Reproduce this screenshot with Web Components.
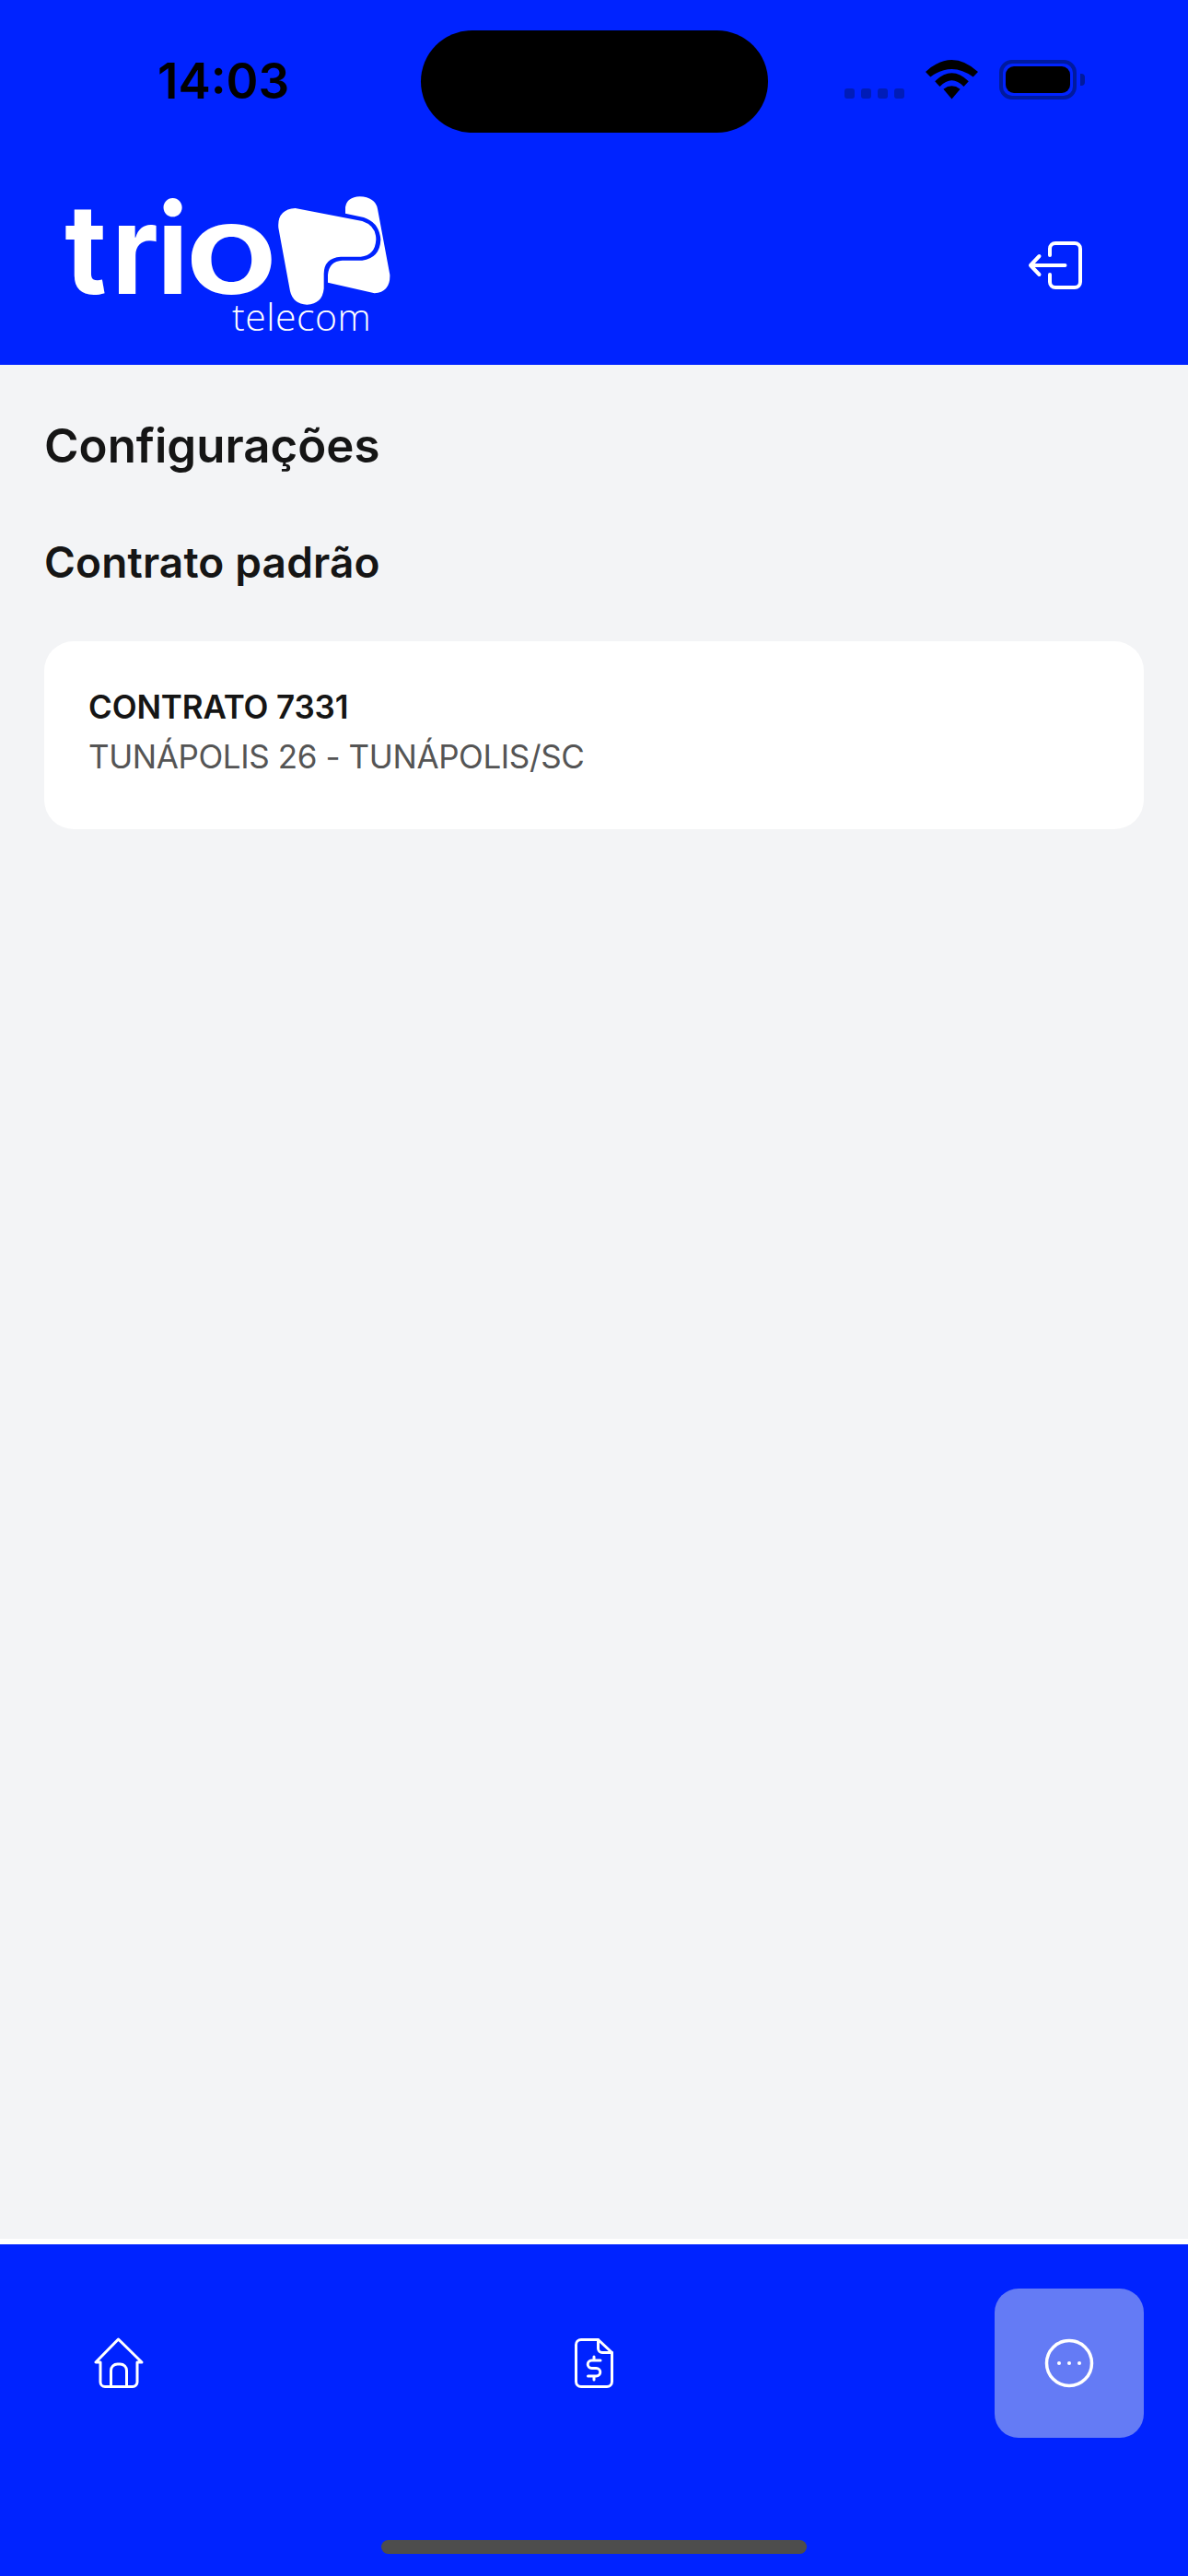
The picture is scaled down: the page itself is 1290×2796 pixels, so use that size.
<!DOCTYPE html>
<html lang="pt-BR">
<head>
<meta charset="utf-8">
<title>Configurações</title>
<style>
  html, body { margin: 0; padding: 0; background: #f3f4f6; }
  body { font-family: "Inter", "Liberation Sans", sans-serif; }
</style>
</head>
<body>
<app-shell>
  <app-header slot="header"></app-header>
  <section-title level="1">Configurações</section-title>
  <section-title level="2">Contrato padrão</section-title>
  <contract-card number="CONTRATO 7331" place="TUNÁPOLIS 26 - TUNÁPOLIS/SC"></contract-card>
  <bottom-nav slot="footer"></bottom-nav>
</app-shell>

<script>
class AppShell extends HTMLElement {
    connectedCallback() {
        const shadowRoot = this.attachShadow({ mode: 'open' });
        shadowRoot.innerHTML = `
        <style>
            :host { display: flex; flex-direction: column; width: 1290px; height: 2796px; background: #f3f4f6; overflow: hidden; }
            main { flex: 1; padding: 0 48px; min-height: 0; }
        </style>
        <slot name="header"></slot>
        <main><slot></slot></main>
        <slot name="footer"></slot>
        `;
    }
}
customElements.define('app-shell', AppShell);

class AppHeader extends HTMLElement {
    connectedCallback() {
        const shadowRoot = this.attachShadow({ mode: 'open' });
        shadowRoot.innerHTML = `
        <style>
            :host { display: block; height: 396px; background: #0023ff; }
            .status { display: grid; grid-template-columns: 457px 377px 1fr; height: 190px; }
            .time { padding: 58px 0 0 171px; font: 600 53px/60px "Inter", "Liberation Sans", sans-serif; color: #000; }
            .pill { margin-top: 33px; height: 111px; border-radius: 56px; background: #000; }
            .right { display: flex; align-items: flex-start; padding: 65px 0 0 83px; }
            .dots { display: flex; gap: 7px; margin-top: 31px; }
            .dots i { width: 11px; height: 11px; border-radius: 3px; background: #001cb8; }
            .wifi { margin-left: 23px; }
            .battery { margin-left: 23px; width: 84px; height: 43px; box-sizing: border-box; border: 4px solid #001a9e; border-radius: 14px; padding: 3px 3px; }
            .battery b { display: block; height: 100%; background: #000; border-radius: 9px; }
            .cap { width: 5px; height: 13px; margin: 15px 0 0 4px; background: #001a9e; border-radius: 0 4px 4px 0; }
            .bar { display: flex; justify-content: space-between; align-items: flex-start; height: 206px; padding-right: 113px; }
            .exit { margin-top: 70px; }
        </style>
        <div class="status">
            <div class="time">14:03</div>
            <div class="pill"></div>
            <div class="right">
                <div class="dots"><i></i><i></i><i></i><i></i></div>
                <svg class="wifi" width="57" height="43" viewBox="0 0 57 43" fill="#000">
                    <path d="M0 13Q28.5-13 57 13L51.7 18.5Q28.5 1.5 5.3 18.5Z"/>
                    <path d="M10.2 23.3Q28.5 5.3 46.8 23.3L41.5 29Q28.5 15.6 15.5 29Z"/>
                    <path d="M19.4 31.7Q28.5 24.9 37.6 31.7L28.5 42.5Z"/>
                </svg>
                <div class="battery"><b></b></div>
                <div class="cap"></div>
            </div>
        </div>
        <div class="bar">
            <trio-logo></trio-logo>
            <svg class="exit" width="62" height="56" viewBox="0 0 62 56" fill="none" stroke="#fff" stroke-width="4" stroke-linecap="round" stroke-linejoin="round">
                <path d="M25 17V10a6 6 0 0 1 6-6H52a6 6 0 0 1 6 6V46a6 6 0 0 1-6 6H31a6 6 0 0 1-6-6V38"/>
                <path d="M41.5 28H4M13.5 18L4 28L13.5 38"/>
            </svg>
        </div>
        `;
    }
}
customElements.define('app-header', AppHeader);

class TrioLogo extends HTMLElement {
    connectedCallback() {
        const shadowRoot = this.attachShadow({ mode: 'open' });
        shadowRoot.innerHTML = `
        <style>
            :host { display: block; width: 400px; height: 190px; margin-left: 50px; }
            svg { display: block; margin-top: -10px; }
            .tri { font: 700 405px "Inter", "Liberation Sans", sans-serif; }
            .o { font: 600 405px "Inter", "Liberation Sans", sans-serif; }
            .sub { font: 300 123px "Open Sans", "Liberation Sans", sans-serif; letter-spacing: 1.5px; }
        </style>
        <svg width="400" height="200" viewBox="0 -30 1200 600" fill="#fff">
            <text class="tri" transform="scale(.92 1)" x="66 232 394" y="388">tri</text>
            <text class="o" transform="scale(1.23 1)" x="368" y="385">o</text>
            <path d="M757 172Q752 112 812 108L1030 150Q1075 165 1075 210Q1072 262 1025 266L960 266Q905 270 905 322L905 370Q900 420 850 422Q805 420 795 378Z"/>
            <path d="M975 125L975 105Q980 72 1022 70Q1072 72 1080 110L1120 325Q1122 380 1070 385L918 350L918 325Q922 280 965 278L1030 278Q1088 270 1090 210Q1086 155 1035 138Z"/>
            <text class="sub" x="606" y="506">telecom</text>
        </svg>
        `;
    }
}
customElements.define('trio-logo', TrioLogo);

class SectionTitle extends HTMLElement {
    connectedCallback() {
        const shadowRoot = this.attachShadow({ mode: 'open' });
        shadowRoot.innerHTML = `
        <style>
            :host { display: block; color: #151515; font-family: "Inter", "Liberation Sans", sans-serif; font-weight: 600; }
            :host([level="1"]) { font-size: 51px; line-height: 60px; padding-top: 58px; }
            :host([level="2"]) { font-size: 46px; line-height: 56px; padding-top: 68px; letter-spacing: 0.15px; }
        </style>
        <slot></slot>
        `;
    }
}
customElements.define('section-title', SectionTitle);

class ContractCard extends HTMLElement {
    connectedCallback() {
        const shadowRoot = this.attachShadow({ mode: 'open' });
        shadowRoot.innerHTML = `
        <style>
            :host { display: block; margin-top: 58px; height: 204px; box-sizing: border-box; padding: 44px 48px; background: #fff; border-radius: 32px; font-family: "Inter", "Liberation Sans", sans-serif; }
            .num { font-size: 35px; line-height: 54px; font-weight: 600; color: #151515; letter-spacing: -0.15px; }
            .place { font-size: 35px; line-height: 54px; font-weight: 400; color: #555; letter-spacing: -0.4px; }
        </style>
        <div class="num">${this.getAttribute('number')}</div>
        <div class="place">${this.getAttribute('place')}</div>
        `;
    }
}
customElements.define('contract-card', ContractCard);

class BottomNav extends HTMLElement {
    connectedCallback() {
        const shadowRoot = this.attachShadow({ mode: 'open' });
        shadowRoot.innerHTML = `
        <style>
            :host { display: block; height: 366px; box-sizing: border-box; border-top: 6px solid #fff; background: #0023ff; }
            .items { display: flex; justify-content: space-between; padding: 48px 48px 0; }
            .item { width: 162px; height: 162px; display: flex; align-items: center; justify-content: center; border-radius: 26px; }
            .item.on { background: #647bf5; }
            svg { display: block; }
            .indicator { width: 462px; height: 15px; margin: 111px auto 0; border-radius: 8px; background: #4d4d4d; }
        </style>
        <div class="items">
            <div class="item">
                <svg width="54" height="56" viewBox="0 0 54 56" fill="none" stroke="#fff" stroke-width="3" stroke-linejoin="round" stroke-linecap="round">
                    <path d="M26.5 2L2 27H7V48.5a5 5 0 0 0 5 5H42a5 5 0 0 0 5-5V27H52Z"/>
                    <path d="M18.5 53.5V36a7 7 0 0 1 7-7h3a7 7 0 0 1 7 7V53.5"/>
                </svg>
            </div>
            <div class="item">
                <svg width="46" height="58" viewBox="0 0 46 58" fill="none" stroke="#fff" stroke-width="3" stroke-linejoin="round" stroke-linecap="round">
                    <path d="M27.5 3.5H9a5.5 5.5 0 0 0-5.5 5.5V49a5.5 5.5 0 0 0 5.5 5.5H37a5.5 5.5 0 0 0 5.5-5.5V17.5Z"/>
                    <path d="M27.5 3.5V13a4.5 4.5 0 0 0 4.5 4.5H42.5"/>
                    <path d="M30 26H20.5a4.25 4.25 0 0 0 0 8.5H25.5a4.25 4.25 0 0 1 0 8.5H16.5M23 22V26M23 43V47"/>
                </svg>
            </div>
            <div class="item on">
                <svg width="56" height="56" viewBox="0 0 56 56" fill="none" stroke="#fff">
                    <circle cx="28" cy="28" r="24.5" stroke-width="3.5"/>
                    <g fill="#fff" stroke="none"><circle cx="17" cy="28" r="2"/><circle cx="28" cy="28" r="2"/><circle cx="39" cy="28" r="2"/></g>
                </svg>
            </div>
        </div>
        <div class="indicator"></div>
        `;
    }
}
customElements.define('bottom-nav', BottomNav);
</script>
</body>
</html>
